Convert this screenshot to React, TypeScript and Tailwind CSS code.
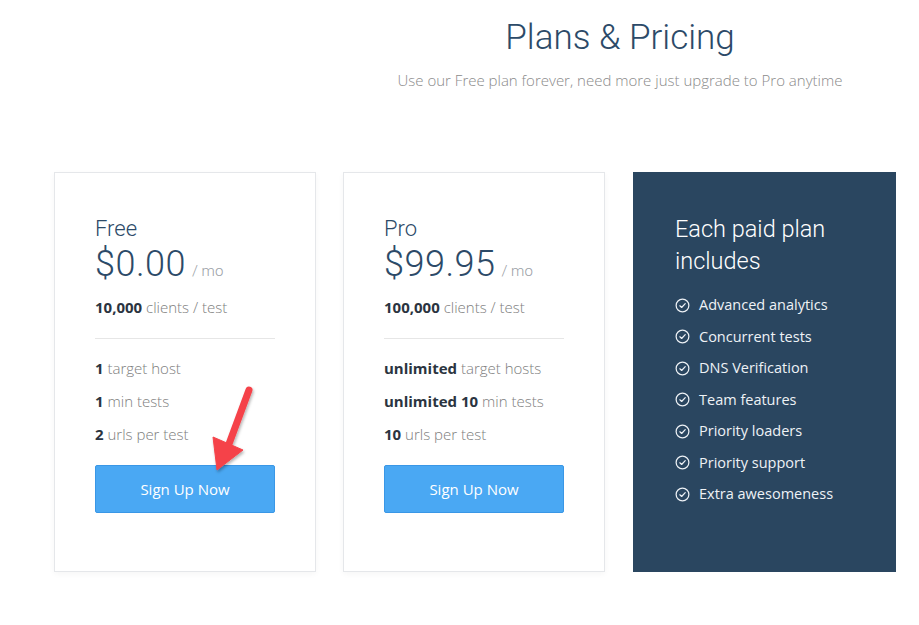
import React from 'react';

interface Plan {
  name: string;
  price: string;
  clients: string;
  features: { strong: string; rest: string }[];
}

const plans: Plan[] = [
  {
    name: 'Free',
    price: '$0.00',
    clients: '10,000',
    features: [
      { strong: '1', rest: 'target host' },
      { strong: '1', rest: 'min tests' },
      { strong: '2', rest: 'urls per test' },
    ],
  },
  {
    name: 'Pro',
    price: '$99.95',
    clients: '100,000',
    features: [
      { strong: 'unlimited', rest: 'target hosts' },
      { strong: 'unlimited 10', rest: 'min tests' },
      { strong: '10', rest: 'urls per test' },
    ],
  },
];

const included = [
  'Advanced analytics',
  'Concurrent tests',
  'DNS Verification',
  'Team features',
  'Priority loaders',
  'Priority support',
  'Extra awesomeness',
];

const CheckCircle = () => (
  <svg width="15" height="15" viewBox="0 0 16 16" fill="none" stroke="currentColor" strokeWidth="1.3" strokeLinecap="round" strokeLinejoin="round">
    <circle cx="8" cy="8" r="6.8" />
    <path d="M5.2 8.3 L7.1 10.1 L10.9 6" />
  </svg>
);

const PlanCard = ({ plan }: { plan: Plan }) => (
  <div className="w-[262px] h-[400px] bg-white border border-[#e5e7ea] shadow-[0_2px_6px_rgba(0,0,0,0.04)] pl-[40px] pr-[40px] pt-[42px]">
    <div className="font-['Roboto'] font-light text-[22px] leading-[28px] text-[#2c4a68]">{plan.name}</div>
    <div className="flex items-baseline mt-[-1px]">
      <span className="font-['Roboto'] font-light text-[36px] leading-[44px] text-[#2c4a68] tracking-[0.5px]">{plan.price}</span>
      <span className="font-['Roboto'] font-light text-[15px] text-[#9aa0a6] ml-[6px]">/ mo</span>
    </div>
    <div className="font-['Open_Sans'] font-light text-[15px] leading-[22px] mt-[10px] text-[#7d7d7d]">
      <span className="font-bold text-[#2b3440]">{plan.clients}</span> clients / test
    </div>
    <div className="w-[180px] h-px bg-[#e6e6e6] mt-[20px]" />
    <div className="flex flex-col gap-[11px] mt-[18px]">
      {plan.features.map((f) => (
        <div key={f.rest} className="font-['Open_Sans'] font-light text-[15px] leading-[22px] text-[#7d7d7d]">
          <span className="font-bold text-[#2b3440]">{f.strong}</span> {f.rest}
        </div>
      ))}
    </div>
    <button className="mt-[20px] w-[180px] h-[48px] bg-[#4aa8f3] border border-[#3a97e6] rounded-[2px] text-white font-['Open_Sans'] text-[15px]">
      Sign Up Now
    </button>
  </div>
);

export default function App() {
  return (
    <div className="relative w-[919px] h-[625px] bg-white overflow-hidden">
      <div className="pl-[321px] pt-[17px] text-center">
        <h1 className="font-['Roboto'] font-light text-[35px] leading-[42px] text-[#2c4a68]">Plans &amp; Pricing</h1>
        <p className="font-['Open_Sans'] font-light text-[15px] leading-[22px] text-[#8a8a8a] mt-[10px]">
          Use our Free plan forever, need more just upgrade to Pro anytime
        </p>
      </div>

      <div className="flex gap-[27px] pl-[54px] mt-[81px]">
        {plans.map((p) => (
          <PlanCard key={p.name} plan={p} />
        ))}
        <div className="w-[263px] h-[400px] bg-[#2a4660] ml-[1px] pl-[42px] pt-[41px] text-white">
          <div className="font-['Roboto'] font-light text-[23.5px] leading-[32px]">
            Each paid plan
            <br />
            includes
          </div>
          <div className="flex flex-col gap-[9.5px] mt-[17px]">
            {included.map((item) => (
              <div key={item} className="flex items-center gap-[9px] font-['Open_Sans'] text-[14.5px] leading-[22px] text-[#eef2f6]">
                <CheckCircle />
                <span>{item}</span>
              </div>
            ))}
          </div>
        </div>
      </div>

      <svg className="absolute left-0 top-0 pointer-events-none" width="919" height="625">
        <defs>
          <filter id="sh" x="-50%" y="-50%" width="200%" height="200%">
            <feDropShadow dx="1" dy="2" stdDeviation="1.5" floodColor="#000" floodOpacity="0.3" />
          </filter>
        </defs>
        <g filter="url(#sh)" fill="#f5434a" stroke="#f5434a">
          <line x1="249" y1="390" x2="229" y2="444" strokeWidth="7" strokeLinecap="round" />
          <polygon points="213,437 243,450 217,470" strokeWidth="1" strokeLinejoin="round" />
        </g>
      </svg>
    </div>
  );
}
